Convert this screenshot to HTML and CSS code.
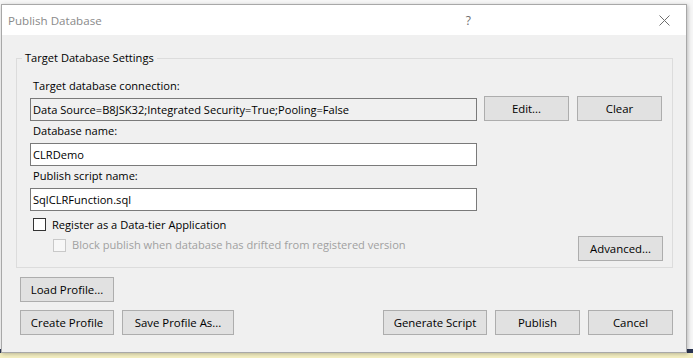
FILE: index.html
```html
<!DOCTYPE html>
<html lang="en">
<head>
    <meta charset="UTF-8">
    <title>Publish Database</title>
    <link rel="stylesheet" href="styles.css">
</head>
<body>
    <div class="dialog">
        <div class="titlebar">
            <span class="title">Publish Database</span>
            <span class="help">?</span>
            <svg class="close" width="11" height="11" viewBox="0 0 11 11">
                <path d="M0.5 0.5 L10.5 10.5 M10.5 0.5 L0.5 10.5" stroke="#6e6e6e" stroke-width="1" fill="none"/>
            </svg>
        </div>
        <div class="content">
            <fieldset class="group">
                <legend>Target Database Settings</legend>
                <label class="field-label first">Target database connection:</label>
                <div class="conn-row">
                    <div class="textbox readonly">Data Source=B8JSK32;Integrated Security=True;Pooling=False</div>
                    <button class="btn btn-small">Edit...</button>
                    <button class="btn btn-small">Clear</button>
                </div>
                <label class="field-label">Database name:</label>
                <div class="textbox">CLRDemo</div>
                <label class="field-label">Publish script name:</label>
                <div class="textbox">SqlCLRFunction.sql</div>
                <div class="check-row">
                    <span class="checkbox"></span>
                    <span>Register as a Data-tier Application</span>
                </div>
                <div class="check-row sub">
                    <span class="checkbox disabled"></span>
                    <span class="muted">Block publish when database has drifted from registered version</span>
                    <button class="btn btn-small advanced">Advanced...</button>
                </div>
            </fieldset>
            <div class="profile-row">
                <button class="btn btn-profile">Load Profile...</button>
            </div>
            <div class="action-row">
                <button class="btn btn-profile">Create Profile</button>
                <button class="btn btn-save">Save Profile As...</button>
                <button class="btn btn-generate push">Generate Script</button>
                <button class="btn btn-small">Publish</button>
                <button class="btn btn-small">Cancel</button>
            </div>
        </div>
    </div>
</body>
</html>
```

FILE: styles.css
```css
        html, body {
            height: 358px;
            overflow: hidden;
        }
        body {
            margin: 0;
            padding: 4px 0 0 1px;
            box-sizing: border-box;
            font-family: 'Open Sans', 'Liberation Sans', sans-serif;
            font-size: 11.1px;
            color: #000;
            background: linear-gradient(to bottom, #f7f7f7 0, #f7f7f7 349px, #2b3552 349px, #2b3552 353px, #f4efc2 353px);
        }
        .dialog {
            width: 686px;
            box-sizing: border-box;
            border: 1px solid #a8a8a8;
            background-color: #f0f0f0;
            box-shadow: 1px 1px 4px rgba(0, 0, 0, 0.25);
        }
        .titlebar {
            height: 30px;
            background-color: #fff;
            display: flex;
            align-items: center;
            padding: 0 16px 0 6px;
        }
        .title {
            flex-grow: 1;
            color: #8a8a8a;
            font-size: 11.6px;
        }
        .help {
            color: #6e6e6e;
            font-size: 12px;
            margin-right: 188px;
        }
        .close {
            display: block;
        }
        .content {
            padding: 15px 13px 17px 14px;
        }
        .group {
            margin: 0;
            padding: 0 9px 6px 13px;
            border: 1px solid #dcdcdc;
            min-width: 0;
        }
        .group legend {
            padding: 0 3px;
            margin-left: -8px;
            line-height: 16px;
        }
        .field-label {
            display: block;
            line-height: 16px;
            margin: 2px 0 4px 3px;
        }
        .field-label.first {
            margin-top: 12px;
            margin-bottom: 2px;
        }
        .textbox {
            width: 447px;
            height: 23px;
            box-sizing: border-box;
            border: 1px solid #7a7a7a;
            background-color: #fff;
            padding: 0 2px;
            line-height: 21px;
            white-space: nowrap;
            overflow: hidden;
        }
        .textbox.readonly {
            background-color: #f0f0f0;
        }
        .conn-row {
            display: flex;
            align-items: flex-end;
            gap: 8px;
        }
        .conn-row .textbox {
            margin-right: -1px;
        }
        .btn {
            height: 25px;
            box-sizing: border-box;
            padding: 0;
            border: 1px solid #adadad;
            background-color: #e1e1e1;
            font-family: inherit;
            font-size: 11.4px;
            color: #000;
        }
        .btn-small {
            width: 85px;
        }
        .btn-profile {
            width: 94px;
        }
        .btn-save {
            width: 112px;
        }
        .btn-generate {
            width: 104px;
        }
        .check-row {
            display: flex;
            align-items: center;
            gap: 6px;
            margin: 7px 0 0 3px;
            height: 13px;
        }
        .check-row.sub {
            align-items: flex-start;
            margin: 5px 0 0 23px;
            height: 25px;
        }
        .check-row.sub .checkbox {
            margin-top: 3px;
        }
        .check-row.sub .muted {
            line-height: 16px;
            margin-top: 1px;
        }
        .checkbox {
            width: 13px;
            height: 13px;
            box-sizing: border-box;
            border: 1px solid #333;
            background-color: #fff;
            flex-shrink: 0;
        }
        .checkbox.disabled {
            border-color: #c8c8c8;
            background-color: #f7f7f7;
        }
        .muted {
            color: #a0a0a0;
        }
        .advanced {
            margin-left: auto;
        }
        .profile-row {
            margin: 9px 0 0 4px;
        }
        .profile-row .btn {
            display: block;
        }
        .action-row {
            display: flex;
            gap: 8px;
            margin: 8px 0 0 4px;
        }
        .push {
            margin-left: auto;
        }
```
